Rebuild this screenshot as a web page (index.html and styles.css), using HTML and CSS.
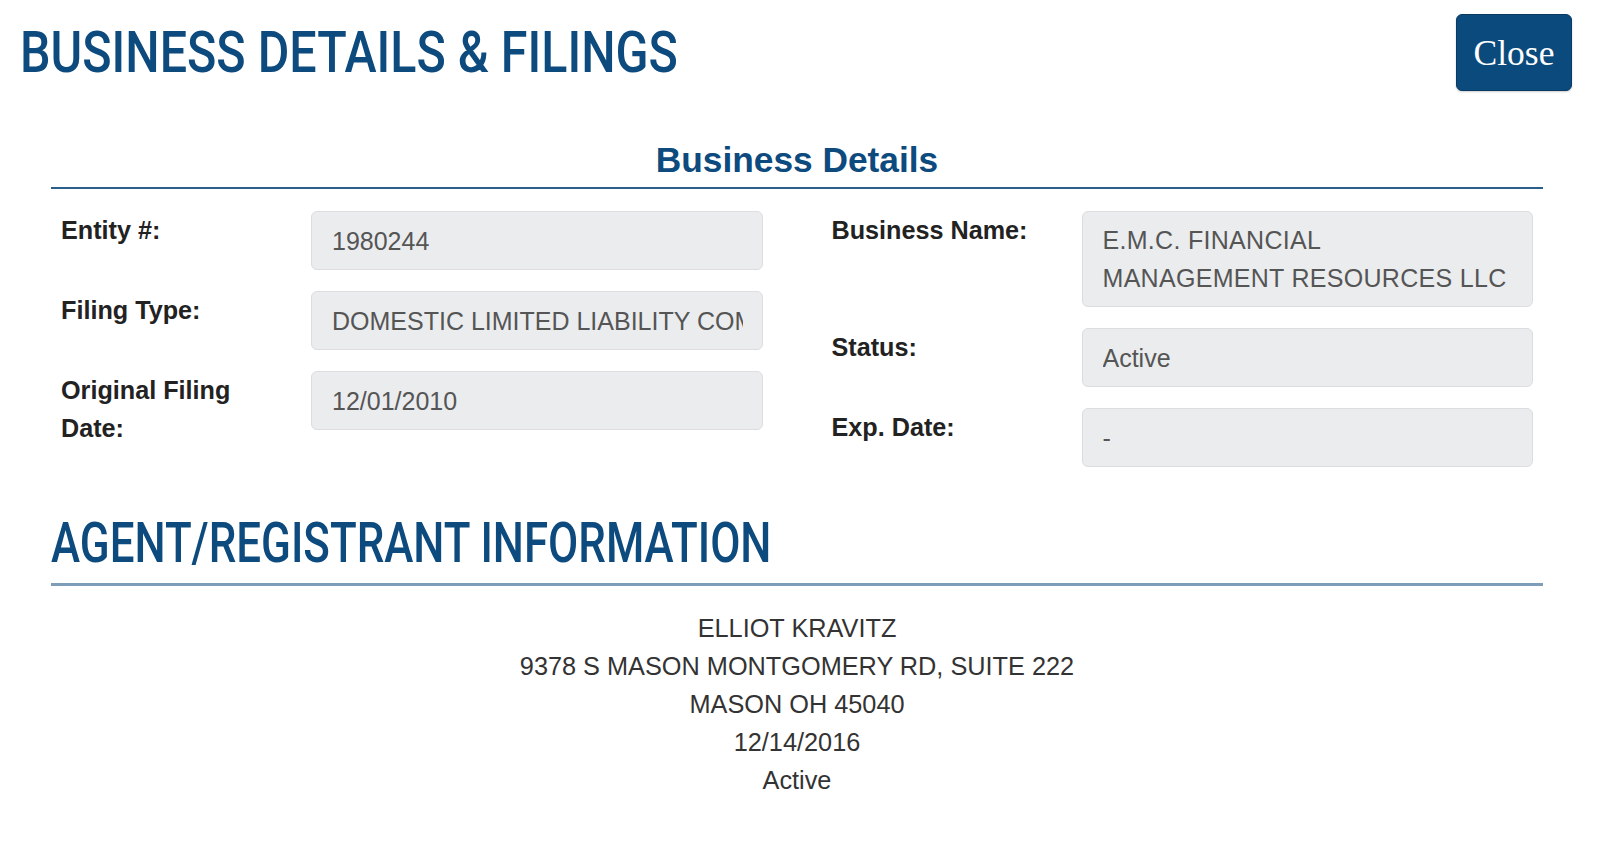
FILE: index.html
```html
<!DOCTYPE html>
<html>
<head>
	<meta http-equiv="Content-Type" content="text/html; charset=utf-8">
	<link rel="stylesheet" href="styles.css">
</head>
<body>
	<div class="top">
		<h1 class="title"><span>BUSINESS DETAILS &amp; FILINGS</span></h1>
		<button class="close" type="button">Close</button>
	</div>
	<div id="content">
		<h3 class="subhead">Business Details</h3>
		<div class="details">
			<div class="col">
				<div class="label">Entity #:</div>
				<div class="field"><span>1980244</span></div>
				<div class="label">Filing Type:</div>
				<div class="field"><span>DOMESTIC LIMITED LIABILITY COMPANY</span></div>
				<div class="label">Original Filing Date:</div>
				<div class="field"><span>12/01/2010</span></div>
			</div>
			<div class="col">
				<div class="label">Business Name:</div>
				<div class="field wrap"><span>E.M.C. FINANCIAL<br>MANAGEMENT RESOURCES LLC</span></div>
				<div class="label">Status:</div>
				<div class="field"><span>Active</span></div>
				<div class="label">Exp. Date:</div>
				<div class="field"><span>-</span></div>
			</div>
		</div>
		<h2 class="section"><span>AGENT/REGISTRANT INFORMATION</span></h2>
		<div class="agent">
			<p>ELLIOT KRAVITZ</p>
			<p>9378 S MASON MONTGOMERY RD, SUITE 222</p>
			<p>MASON OH 45040</p>
			<p>12/14/2016</p>
			<p>Active</p>
		</div>
	</div>
</body>
</html>
```

FILE: styles.css
```css
*{margin:0;padding:0;}
body{
	background:#fff;
	font-family:"Liberation Sans",Arial,sans-serif;
	color:#222;
}
.top{
	display:flex;
	justify-content:space-between;
	align-items:flex-start;
	padding:14px 28px 0 20px;
}
.title{
	margin-top:9px;
	font-family:Roboto,sans-serif;
	font-weight:500;
	font-size:58px;
	line-height:58px;
	color:#0d4a7e;
	white-space:nowrap;
}
.title span,.section span{
	display:inline-block;
	transform:scaleX(0.835);
	transform-origin:left center;
}
.section span{
	transform:scaleX(0.783);
}
.close{
	width:116px;
	height:77px;
	background:#0b4a7d;
	border:1px solid #083a64;
	border-radius:6px;
	color:#fff;
	font-family:"Liberation Serif","Times New Roman",serif;
	font-size:35.5px;
	box-shadow:0 1px 2px rgba(0,0,0,0.2);
}
#content{
	margin:0 57px 0 51px;
}
.subhead{
	margin-top:48px;
	text-align:center;
	font-size:35.3px;
	line-height:42px;
	color:#0d4a7e;
	padding-bottom:6px;
	border-bottom:2px solid #2a5f8c;
}
.details{
	display:flex;
	align-items:flex-start;
	gap:69px;
	padding:22px 10px 0 10px;
}
.col{
	flex:1;
	min-width:0;
	display:grid;
	grid-template-columns:250px minmax(0,1fr);
	align-content:start;
	row-gap:21px;
	align-items:start;
}
.label{
	font-weight:bold;
	font-size:25.2px;
	line-height:38px;
	color:#222;
	padding-right:20px;
}
.field{
	min-height:59px;
	box-sizing:border-box;
	padding:9px 19px 9px 20px;
	background:#ebecee;
	border:1px solid #dcdde0;
	border-radius:6px;
	font-size:25px;
	line-height:38px;
	color:#555;
	display:flex;
	align-items:center;
}
.field span{
	display:block;
	overflow:hidden;
	white-space:nowrap;
}
.field.wrap span{
	white-space:normal;
	letter-spacing:0.3px;
}
.section{
	margin-top:46px;
	font-family:Roboto,sans-serif;
	font-weight:500;
	font-size:56px;
	line-height:60px;
	color:#0d4a7e;
	white-space:nowrap;
	padding-bottom:10px;
	border-bottom:3px solid #7d9db9;
}
.agent{
	padding-top:23px;
	text-align:center;
	font-size:25.3px;
	line-height:38px;
	color:#333;
}
```
